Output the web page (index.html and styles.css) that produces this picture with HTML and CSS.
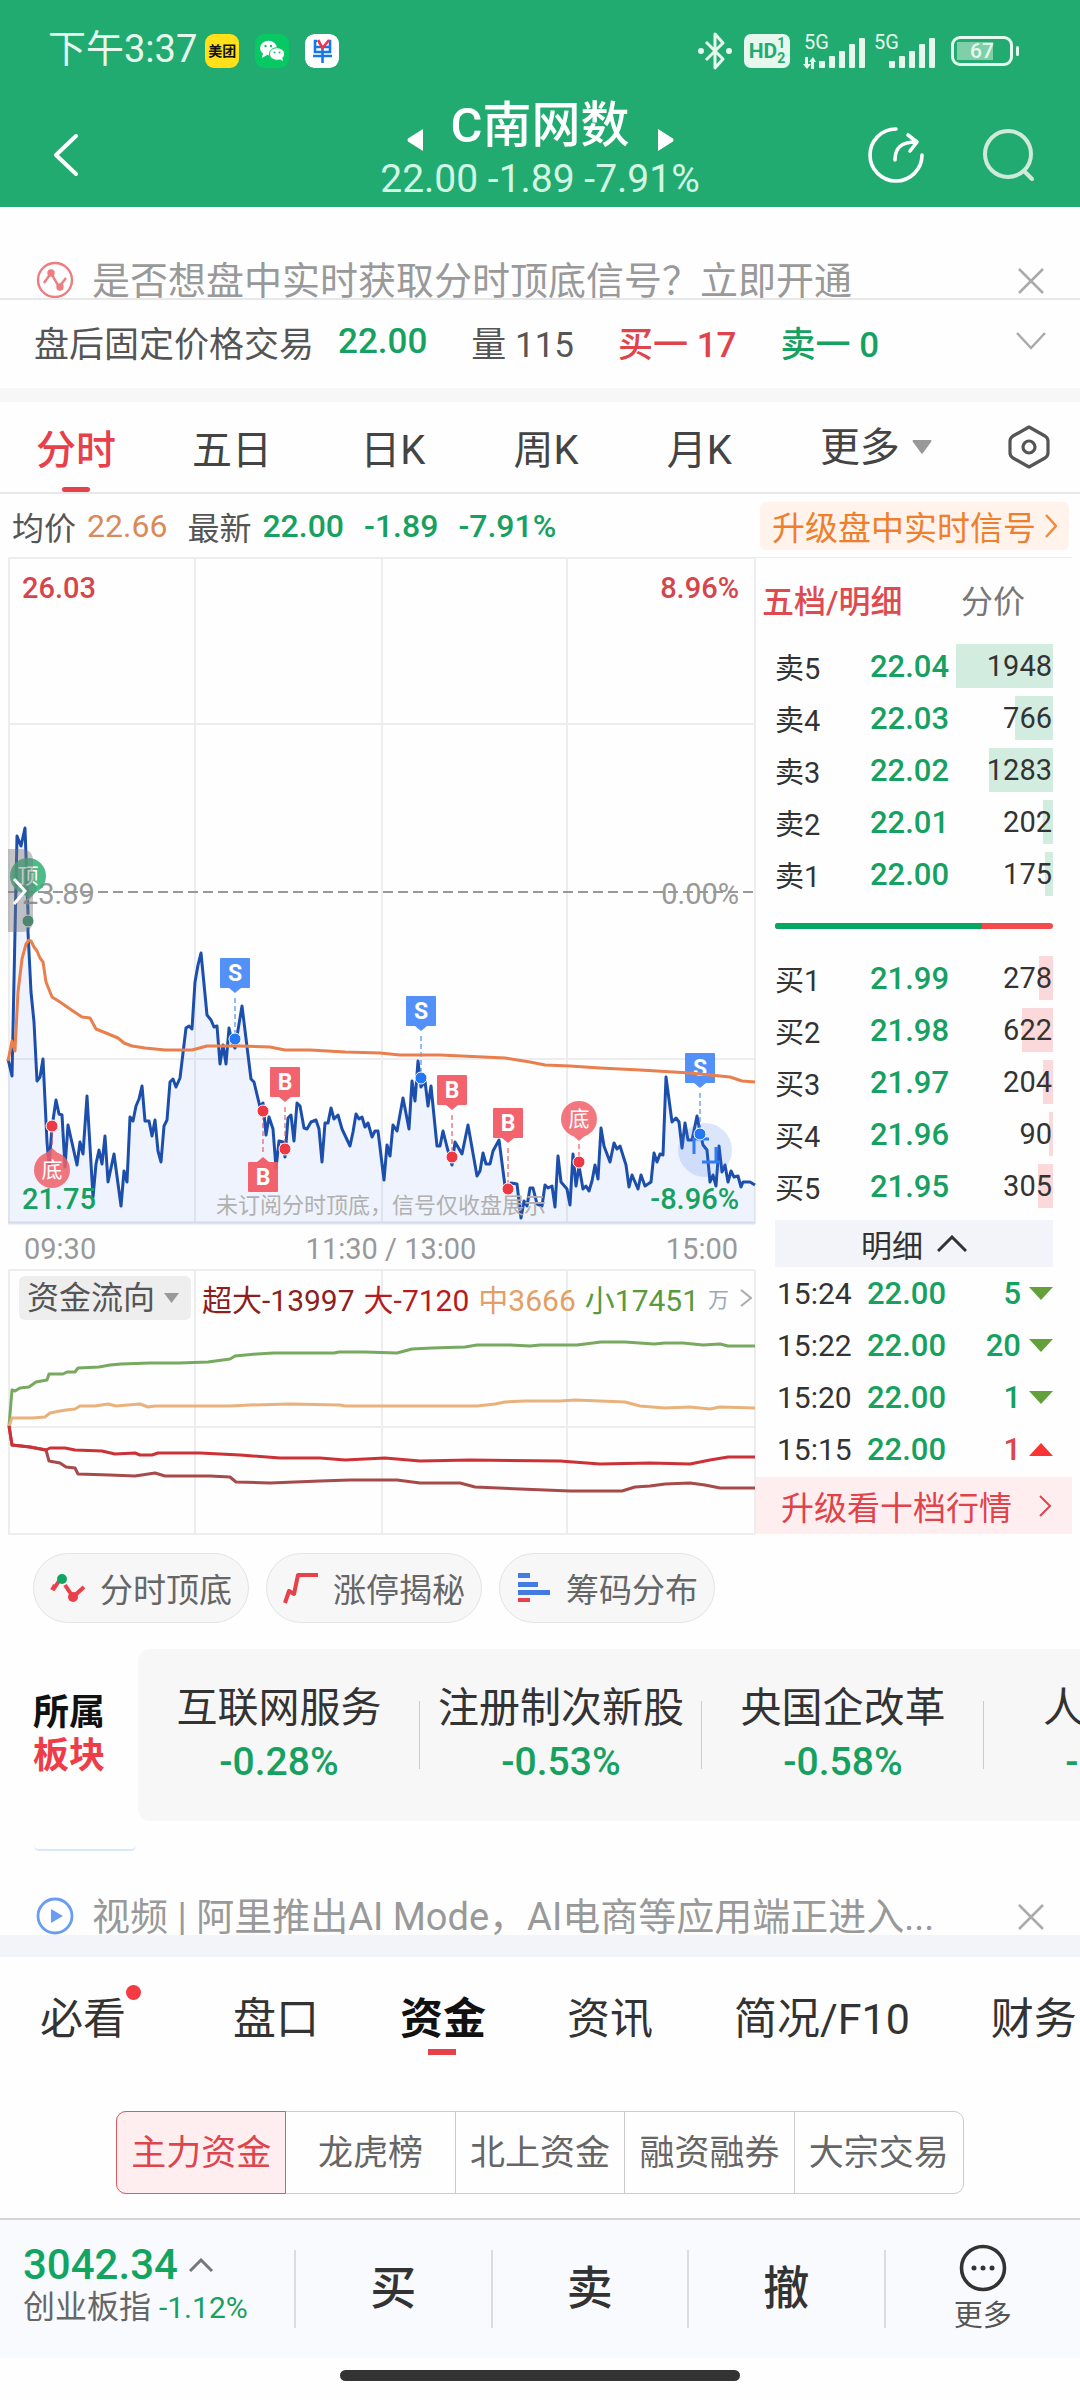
FILE: index.html
```html
<!DOCTYPE html>
<html lang="zh-CN">
<head>
    <meta charset="UTF-8">
    <meta name="viewport" content="width=device-width, initial-scale=1">
    <title>C南网数</title>
    <link rel="stylesheet" href="styles.css">
</head>
<body>
    <header class="top">
        <!-- Status bar -->
        <div class="status">
            <span class="clock">下午3:37</span>
            <span class="app-icon app-meituan">美团</span>
            <svg class="app-icon" viewBox="0 0 34 34">
                <rect width="34" height="34" rx="9" fill="#07c964"/>
                <ellipse cx="13.500" cy="14" rx="8.500" ry="7.200" fill="#fff"/>
                <path d="M8 19l-1 5 5-3z" fill="#fff"/>
                <ellipse cx="22" cy="20" rx="7.600" ry="6.300" fill="#fff" stroke="#07c964"/>
                <path d="M24 25l4 2-1-4z" fill="#fff"/>
                <g fill="#07c964"><circle cx="10.500" cy="12" r="1.200"/><circle cx="16" cy="12" r="1.200"/><circle cx="19.500" cy="18.500" r="1"/><circle cx="24.500" cy="18.500" r="1"/></g>
            </svg>
            <svg class="app-icon" viewBox="0 0 34 34" fill="none" stroke="#1678e8" stroke-width="2.600">
                <rect width="34" height="34" rx="9" fill="#fff" stroke="none"/>
                <path d="M12 7H10v11h15V7h-2M10 13h15M8 22h19M17.500 14v15"/>
                <path d="M13 6l4.500 8L24 6" stroke="#f0344a"/>
            </svg>
            <span class="spacer"></span>
            <svg class="bt" viewBox="0 0 36 40" fill="none" stroke="#e6f8ee" stroke-width="3">
                <path d="M9 11l17 17-8 9V3l8 9L9 29" stroke-linejoin="round"/>
                <circle cx="4" cy="20" r="1.500"/><circle cx="32" cy="20" r="1.500"/>
            </svg>
            <span class="hd">HD<span class="hd-sim"><i>1</i><i>2</i></span></span>
            <svg class="signal" viewBox="0 0 64 36" fill="#e6f8ee">
                <text x="0" y="16" font-size="20">5G</text>
                <path d="M2 24h3v7h3l-4 5-4-5h2zM8 36v-7H6l4-5 3 5h-2v7z" transform="translate(-1 0)"/>
                <rect x="15" y="28" width="6" height="7" rx="1"/><rect x="25" y="23" width="6" height="12" rx="1"/><rect x="35" y="18" width="6" height="17" rx="1"/><rect x="45" y="11" width="6" height="24" rx="1"/><rect x="55" y="5" width="6" height="30" rx="1"/>
            </svg>
            <svg class="signal" viewBox="0 0 64 36" fill="#e6f8ee">
                <text x="0" y="16" font-size="20">5G</text>
                <rect x="15" y="28" width="6" height="7" rx="1"/><rect x="25" y="23" width="6" height="12" rx="1"/><rect x="35" y="18" width="6" height="17" rx="1"/><rect x="45" y="11" width="6" height="24" rx="1"/><rect x="55" y="5" width="6" height="30" rx="1"/>
            </svg>
            <span class="battery">67</span>
        </div>

        <!-- Title bar -->
        <div class="titlebar">
            <button class="icon-btn back" aria-label="返回">
                <svg width="26" height="44" viewBox="0 0 26 44" fill="none" stroke="#fff" stroke-width="4" stroke-linecap="round" stroke-linejoin="round"><path d="M23 3L3 22l20 19"/></svg>
            </button>
            <div class="title">
                <div class="title-row">
                    <svg width="16" height="22" viewBox="0 0 16 22" fill="#fff"><path d="M16 0v22L1 12.500q-1-1.500 0-3z"/></svg>
                    <h1>C南网数</h1>
                    <svg width="16" height="22" viewBox="0 0 16 22" fill="#fff"><path d="M0 0v22l15-9.500q1-1.500 0-3z"/></svg>
                </div>
                <p>22.00 -1.89 -7.91%</p>
            </div>
            <div class="title-actions">
                <button class="icon-btn" aria-label="分享">
                    <svg width="56" height="56" viewBox="0 0 56 56" fill="none" stroke="#fff" stroke-width="3.600" stroke-linecap="round" stroke-linejoin="round"><path d="M28 2A26 26 0 1 0 54 28"/><path d="M27 33c0-12 6-18 21-18M40 8l9 7-7 9"/></svg>
                </button>
                <button class="icon-btn" aria-label="搜索">
                    <svg width="54" height="56" viewBox="0 0 54 56" fill="none" stroke="#cfeadb" stroke-width="4" stroke-linecap="round"><circle cx="26" cy="27" r="23"/><path d="M42 44l8 8"/></svg>
                </button>
            </div>
        </div>
    </header>

    <div class="notice">
        <svg width="38" height="38" viewBox="0 0 38 38" fill="none" stroke="#ee7c80" stroke-width="2.400"><circle cx="19" cy="19" r="17"/><path d="M8 22l7-10 8 14 7-9"/><circle cx="15" cy="12" r="2.500" fill="#ee7c80"/><circle cx="24" cy="26" r="2.500" fill="#ee7c80"/></svg>
        <a href="#">是否想盘中实时获取分时顶底信号？立即开通</a>
        <button class="icon-btn" aria-label="关闭">
            <svg width="26" height="26" viewBox="0 0 26 26" stroke="#aaa" stroke-width="2.500"><path d="M1 1l24 24M25 1L1 25"/></svg>
        </button>
    </div>

    <div class="fixed-price">
        <span>盘后固定价格交易</span><b class="green">22.00</b>
        <span class="item">量 115</span>
        <b class="item red">买一 17</b>
        <b class="item green">卖一 0</b>
        <button class="icon-btn" aria-label="展开">
            <svg width="30" height="20" viewBox="0 0 30 20" fill="none" stroke="#aaa" stroke-width="2.500"><path d="M1 2l14 15L29 2"/></svg>
        </button>
    </div>

    <nav class="period-tabs">
        <button class="active">分时</button>
        <button>五日</button>
        <button>日K</button>
        <button>周K</button>
        <button>月K</button>
        <label class="dropdown">
            <select aria-label="更多周期"><option>更多</option></select>
            <svg width="20" height="14" viewBox="0 0 20 14" fill="#999"><path d="M1 0h18q1 1 0 2l-8 11q-1 1-2 0L1 2q-1-1 0-2z"/></svg>
        </label>
        <button class="settings icon-btn" aria-label="设置">
            <svg width="42" height="44" viewBox="0 0 42 44" fill="none" stroke="#555" stroke-width="3.200" stroke-linejoin="round"><path d="M21 2l16 9q3 2 3 5v12q0 3-3 5l-16 9-16-9q-3-2-3-5V16q0-3 3-5z"/><circle cx="21" cy="22" r="6"/></svg>
        </button>
    </nav>

    <div class="quote-line">
        <span>均价</span><span class="orange">22.66</span>
        <span class="gap">最新</span><b class="green">22.00</b>
        <b class="green gap-s">-1.89</b>
        <b class="green gap-s">-7.91%</b>
        <a class="upgrade-tag" href="#">升级盘中实时信号
            <svg width="12" height="24" viewBox="0 0 12 24" fill="none" stroke="#f08a3c" stroke-width="2.500"><path d="M1 1l10 11L1 23"/></svg>
        </a>
    </div>

    <main class="market">
        <section class="charts">
            <!-- Intraday chart -->
            <svg class="plot" viewBox="0 558 756 708">
                <g fill="none" stroke="#ededf0" stroke-width="2">
                    <path d="M8 559H755M8 725H755M8 1060H755M9 558V1225M195 558V1225M382 558V1225M567 558V1225M755 558V1225"/>
                    <path d="M8 1224H755" stroke="#dfe3ec" stroke-width="3"/>
                </g>
                <path d="M8 893H755" stroke="#999" stroke-width="2" stroke-dasharray="10 5"/>
                <path id="area" fill="#3c78f0" fill-opacity=".08"/>
                <path id="price" class="line" stroke="#1c4fac" stroke-width="3"/>

                <g class="scale">
                    <text x="22" y="599" class="t-red">26.03</text>
                    <text x="739" y="599" class="t-red" text-anchor="end">8.96%</text>
                    <text x="22" y="905" class="t-gray">23.89</text>
                    <text x="739" y="905" class="t-gray" text-anchor="end">0.00%</text>
                    <text x="22" y="1210" class="t-green">21.75</text>
                    <text x="739" y="1210" class="t-green" text-anchor="end">-8.96%</text>
                    <text x="24" y="1260" class="t-gray">09:30</text>
                    <text x="391" y="1260" class="t-gray" text-anchor="middle">11:30 / 13:00</text>
                    <text x="738" y="1260" class="t-gray" text-anchor="end">15:00</text>
                </g>
                <text x="216" y="1214" class="watermark">未订阅分时顶底，信号仅收盘展示</text>

                <!-- Current price -->
                <circle cx="705" cy="1151" r="27" fill="#3c78f0" fill-opacity=".18"/>
                <path d="M694 1155V1140H709M702 1163H720M716 1163V1148" fill="none" stroke="#2f7cf6" stroke-width="3"/>

                <!-- Signal markers -->
                <g id="markers"></g>

                <!-- Average price -->
                <path class="line" stroke="#e87f4c" stroke-width="3" d="M8 1062L12 1042 15 1052 18 993 22 960 26 945 29 941 31 942 34 948 37 952 40 959 43 963 46 983 50 993 52 998 60 1003 70 1010 82 1018 90 1019 96 1030 106 1034 118 1039 124 1044 132 1047 145 1049 165 1051 192 1051 207 1047 240 1047 270 1048 285 1051 310 1051 345 1053 380 1054 400 1056 440 1056 505 1059 530 1063 545 1066 570 1067 600 1069 640 1071 690 1074 730 1078 742 1082 755 1083"/>

                <!-- Drawer handle -->
                <path d="M8 850H21Q33 850 33 862V921Q33 933 21 933H8z" fill="#777" fill-opacity=".42"/>
                <path d="M14 880L25 892 14 905" fill="none" stroke="#fff" stroke-width="3"/>
            </svg>

            <!-- Fund flow chart -->
            <div class="flow">
                <svg class="plot" viewBox="0 1266 756 270">
                    <path d="M8 1271H755M8 1428H755M8 1535H755M9 1271V1535M195 1271V1535M382 1271V1535M567 1271V1535M755 1271V1535" fill="none" stroke="#ededf0" stroke-width="2"/>
                    <g class="line" stroke-width="3">
                        <path stroke="#78a960" d="M9 1427L12 1391 15 1392 20 1389 29 1388 36 1383 47 1381 49 1375 63 1375 67 1373 75 1373 78 1369 99 1368 110 1366 121 1365 150 1364 179 1364 208 1363 230 1360 235 1357 257 1355 274 1354 334 1354 339 1353 365 1353 397 1354 412 1350 432 1349 465 1348 477 1346 510 1346 530 1347 540 1346 577 1346 601 1343 625 1343 654 1345 665 1344 683 1344 703 1346 720 1345 728 1347 755 1347"/>
                        <path stroke="#e9b27c" d="M9 1427L12 1419 32 1419 45 1418 50 1414 60 1412 66 1411 75 1410 80 1407 95 1407 108 1405 116 1407 128 1406 140 1405 148 1408 155 1407 200 1407 230 1407 250 1406 290 1405 340 1406 345 1407 477 1407 495 1405 505 1403 525 1402 560 1402 575 1401 600 1402 625 1403 640 1407 665 1409 690 1408 710 1410 720 1408 755 1409"/>
                        <path stroke="#a64a4a" d="M9 1427L12 1446 30 1448 46 1451 49 1462 60 1464 66 1468 75 1469 78 1475 110 1476 135 1477 155 1474 165 1477 180 1477 210 1477 230 1478 236 1483 270 1484 320 1482 350 1481 397 1481 420 1484 460 1484 475 1488 520 1490 570 1492 622 1492 635 1488 650 1487 665 1485 690 1484 705 1486 720 1489 755 1489"/>
                        <path stroke="#cc3135" d="M9 1427L12 1446 30 1448 46 1451 50 1449 65 1449 75 1451 102 1452 115 1455 135 1454 140 1456 152 1456 158 1454 200 1454 240 1456 280 1459 320 1459 345 1461 385 1459 420 1462 470 1461 560 1462 600 1465 650 1464 690 1465 710 1461 728 1458 755 1458"/>
                    </g>
                </svg>
                <div class="flow-head">
                    <label class="dropdown flow-select">
                        <select aria-label="指标"><option>资金流向</option></select>
                        <svg width="15" height="10" viewBox="0 0 15 10" fill="#999"><path d="M0 0h15L7.500 10z"/></svg>
                    </label>
                    <span class="f-xl">超大-13997</span>
                    <span class="f-l">大-7120</span>
                    <span class="f-m">中3666</span>
                    <span class="f-s">小17451</span>
                    <small>万</small>
                    <svg width="12" height="18" viewBox="0 0 12 18" fill="none" stroke="#aaa" stroke-width="2"><path d="M1 1l10 8L1 17"/></svg>
                </div>
            </div>
        </section>

        <aside class="book">
            <div class="book-tabs">
                <button class="active">五档/明细</button>
                <button>分价</button>
            </div>
            <table class="levels sell">
                <tr><th>卖5</th><td>22.04</td><td style="--bar: 97px">1948</td></tr>
                <tr><th>卖4</th><td>22.03</td><td style="--bar: 38px">766</td></tr>
                <tr><th>卖3</th><td>22.02</td><td style="--bar: 64px">1283</td></tr>
                <tr><th>卖2</th><td>22.01</td><td style="--bar: 10px">202</td></tr>
                <tr><th>卖1</th><td>22.00</td><td style="--bar: 8px">175</td></tr>
            </table>
            <div class="ratio"><span style="width: 74.500%"></span></div>
            <table class="levels buy">
                <tr><th>买1</th><td>21.99</td><td style="--bar: 14px">278</td></tr>
                <tr><th>买2</th><td>21.98</td><td style="--bar: 31px">622</td></tr>
                <tr><th>买3</th><td>21.97</td><td style="--bar: 10px">204</td></tr>
                <tr><th>买4</th><td>21.96</td><td style="--bar: 4px">90</td></tr>
                <tr><th>买5</th><td>21.95</td><td style="--bar: 15px">305</td></tr>
            </table>
            <button class="detail-toggle">明细
                <svg width="30" height="17" viewBox="0 0 30 17" fill="none" stroke="#333" stroke-width="3"><path d="M1 16L15 2l14 14"/></svg>
            </button>
            <table class="trades">
                <tr><th>15:24</th><td>22.00</td><td>5</td><td><svg width="24" height="13" viewBox="0 0 24 13"><path d="M0 0h24L12 13z" fill="#63a03c"/></svg></td></tr>
                <tr><th>15:22</th><td>22.00</td><td>20</td><td><svg width="24" height="13" viewBox="0 0 24 13"><path d="M0 0h24L12 13z" fill="#63a03c"/></svg></td></tr>
                <tr><th>15:20</th><td>22.00</td><td>1</td><td><svg width="24" height="13" viewBox="0 0 24 13"><path d="M0 0h24L12 13z" fill="#63a03c"/></svg></td></tr>
                <tr><th>15:15</th><td>22.00</td><td class="red">1</td><td><svg width="24" height="13" viewBox="0 0 24 13"><path d="M0 13h24L12 0z" fill="#f93434"/></svg></td></tr>
            </table>
            <a class="upgrade-bar" href="#">升级看十档行情
                <svg width="13" height="22" viewBox="0 0 13 22" fill="none" stroke="#e0434a" stroke-width="2"><path d="M1 1l10 10L1 21"/></svg>
            </a>
        </aside>
    </main>

    <div class="chips">
        <button>
            <svg width="36" height="32" viewBox="0 0 36 32" fill="none" stroke="#e8414b" stroke-width="4"><path d="M2 18L5 13M15 13l8 12L34 15"/><path d="M9 9L3 18"/><circle cx="12" cy="7" r="5" fill="#12a561" stroke="none"/><circle cx="23" cy="25" r="5" fill="#e8414b" stroke="none"/></svg>
            分时顶底
        </button>
        <button>
            <svg width="36" height="32" viewBox="0 0 36 32" fill="none" stroke="#e8414b" stroke-width="4" stroke-linejoin="round"><path d="M2 31l4-12 5 3 4-19h20"/></svg>
            涨停揭秘
        </button>
        <button>
            <svg width="36" height="32" viewBox="0 0 36 32" fill="#447be0"><rect x="2" y="1" width="12" height="5"/><rect x="2" y="10" width="20" height="5"/><rect x="2" y="18" width="32" height="5"/><rect x="2" y="26" width="12" height="4" fill="#e8414b"/></svg>
            筹码分布
        </button>
    </div>

    <section class="boards">
        <h2>所属<br><em>板块</em></h2>
        <ul>
            <li><span>互联网服务</span><b>-0.28%</b></li>
            <li><span>注册制次新股</span><b>-0.53%</b></li>
            <li><span>央国企改革</span><b>-0.58%</b></li>
            <li><span>人工智能</span><b>-0.95%</b></li>
        </ul>
    </section>
    <div class="card-edge"></div>

    <div class="notice notice-video">
        <svg width="38" height="38" viewBox="0 0 38 38"><circle cx="19" cy="19" r="17" fill="none" stroke="#6a9cf5" stroke-width="2.800"/><path d="M15 12l12 7-12 7z" fill="#6a9cf5"/></svg>
        <a href="#">视频 | 阿里推出AI Mode，AI电商等应用端正进入...</a>
        <button class="icon-btn" aria-label="关闭">
            <svg width="26" height="26" viewBox="0 0 26 26" stroke="#aaa" stroke-width="2.500"><path d="M1 1l24 24M25 1L1 25"/></svg>
        </button>
    </div>

    <nav class="info-tabs">
        <button class="dot">必看</button>
        <button>盘口</button>
        <button class="active">资金</button>
        <button>资讯</button>
        <button>简况/F10</button>
        <button>财务</button>
    </nav>

    <div class="segment">
        <button class="active">主力资金</button>
        <button>龙虎榜</button>
        <button>北上资金</button>
        <button>融资融券</button>
        <button>大宗交易</button>
    </div>

    <footer class="trade-bar">
        <div class="index">
            <div class="index-value">3042.34
                <svg width="24" height="14" viewBox="0 0 24 14" fill="none" stroke="#777" stroke-width="3"><path d="M1 13L12 2l11 11"/></svg>
            </div>
            <div class="index-name">创业板指 <span>-1.12%</span></div>
        </div>
        <button>买</button>
        <button>卖</button>
        <button>撤</button>
        <button class="more">
            <svg width="48" height="48" viewBox="0 0 48 48" fill="none" stroke="#333" stroke-width="3.600"><circle cx="24" cy="24" r="21.500"/><g fill="#333" stroke="none"><circle cx="15" cy="24" r="2.500"/><circle cx="24" cy="24" r="2.500"/><circle cx="33" cy="24" r="2.500"/></g></svg>
            更多
        </button>
    </footer>
    <div class="home-bar"></div>

    <script>
        // Intraday price line, x y pairs
        const price = '8 1060 12 1077 13 1030 15 933 17 837 21 847 25 829 28 913 28 933 31 993 34 1023 37 1082 40 1078 43 1060 47 1143 49 1167 52 1128 56 1101 59 1115 62 1116 65 1168 68 1126 77 1166 80 1143 83 1155 87 1097 93 1198 96 1165 99 1151 102 1165 105 1137 108 1183 114 1155 121 1207 124 1172 127 1183 130 1118 133 1122 136 1107 139 1100 142 1087 145 1122 149 1122 152 1137 155 1121 158 1152 161 1163 164 1127 167 1121 170 1083 173 1080 176 1088 180 1079 186 1029 189 1027 192 1030 195 983 198 966 201 954 207 1016 211 1021 214 1028 217 1027 220 1065 223 1046 226 1065 229 1029 232 1043 235 1049 242 1007 251 1080 254 1083 260 1108 263 1104 266 1136 269 1118 273 1130 276 1169 279 1142 283 1143 285 1158 288 1119 291 1116 294 1142 297 1104 300 1107 304 1129 307 1130 311 1123 316 1121 319 1130 322 1163 325 1124 328 1124 331 1109 334 1120 338 1116 342 1130 350 1147 353 1133 356 1115 359 1120 362 1118 365 1128 368 1124 372 1138 375 1132 378 1132 384 1181 387 1146 390 1157 393 1126 397 1132 403 1099 409 1130 412 1082 415 1102 418 1062 421 1088 425 1082 428 1107 431 1087 437 1147 440 1147 443 1132 447 1148 452 1166 455 1143 462 1155 468 1126 477 1177 480 1172 483 1154 486 1165 490 1165 493 1152 499 1141 505 1187 508 1195 511 1184 517 1185 521 1219 524 1202 527 1207 530 1189 533 1189 537 1205 542 1207 545 1186 548 1189 552 1187 555 1208 558 1157 561 1183 567 1190 570 1206 573 1155 576 1187 579 1167 583 1190 586 1187 589 1192 592 1182 595 1166 598 1180 601 1129 604 1147 610 1163 614 1144 617 1150 620 1147 626 1166 629 1188 632 1176 638 1190 641 1176 645 1187 651 1183 654 1154 657 1163 660 1155 663 1156 666 1078 672 1123 676 1119 679 1123 682 1149 685 1124 688 1141 692 1141 697 1117 700 1133 703 1146 707 1151 710 1183 713 1176 716 1187 719 1147 722 1173 725 1166 728 1183 731 1172 734 1178 738 1177 741 1188 743 1183 750 1183 755 1186';
        document.getElementById('price').setAttribute('d', 'M' + price);
        document.getElementById('area').setAttribute('d', 'M8 1224L' + price + ' 755 1224z');

        // x, label centre y, dot y, text
        const markers = [
            [235, 974, 1040, 'S'], [263, 1178, 1112, 'B'], [285, 1083, 1150, 'B'],
            [421, 1012, 1079, 'S'], [452, 1091, 1158, 'B'], [508, 1124, 1190, 'B'],
            [700, 1069, 1135, 'S'], [52, 1171, 1127, '底'], [579, 1120, 1163, '底'],
            [28, 877, 922, '顶']
        ];
        const fills = { S: '#4a8bf8', B: '#f25b66', '底': '#f0606a', '顶': '#2fb176' };
        const dots = { S: '#2478f5', B: '#ee3843', '底': '#ee3843', '顶': '#2f9068' };

        document.getElementById('markers').innerHTML = markers.map(([x, y, dot, label]) => {
            const dir = dot > y ? 1 : -1;
            const round = label === '底' || label === '顶';
            const shape = round
                ? `<circle cx="${x}" cy="${y}" r="18"/><path d="M${x - 8} ${y + dir * 15}h16l-8 ${dir * 7}z"/>`
                : `<rect x="${x - 15}" y="${y - 15}" width="30" height="30" rx="1"/><path d="M${x - 6} ${y + dir * 15}h12l-6 ${dir * 5}z"/>`;
            return `
                <path d="M${x} ${y + dir * 25}V${dot}" stroke="${dots[label]}" stroke-width="1" stroke-dasharray="5 3"/>
                <g fill="${fills[label]}" opacity="${round ? 0.85 : 0.95}">${shape}</g>
                <text x="${x}" y="${y + (round ? 7 : 8)}" class="${round ? 'pin-text' : 'flag-text'}">${label}</text>
                <circle cx="${x}" cy="${dot}" r="6" fill="${dots[label]}" stroke="#fff" stroke-width="1"/>`;
        }).join('');
    </script>
</body>
</html>
```
FILE: styles.css
```css
* {
    box-sizing: border-box;
    margin: 0;
    padding: 0;
}

body {
    font-family: Roboto, "Noto Sans CJK SC", sans-serif;
    background-color: #fefefe;
    color: #555;
    overflow-x: hidden;
}

button, select {
    font: inherit;
    color: inherit;
    background: none;
    border: none;
    cursor: pointer;
}

a {
    color: inherit;
    text-decoration: none;
}

b, th {
    font-weight: 500;
}

svg {
    flex: none;
    display: block;
}

.red {
    color: #e0434a;
}

.green {
    color: #16a161;
}

.orange {
    color: #d98a58;
}

.spacer {
    flex: 1;
}

/* Header */
.top {
    height: 207px;
    background-color: #22ab70;
    color: #fff;
}

.status {
    display: flex;
    align-items: center;
    height: 102px;
    padding: 0 67px 0 48px;
    color: #e6f8ee;
}

.clock {
    font-size: 38px;
    line-height: 46px;
    margin-right: 8px;
    padding-bottom: 4px;
}

.app-icon {
    width: 34px;
    height: 34px;
    margin-right: 16px;
    border-radius: 9px;
}

.app-meituan {
    background-color: #ffe019;
    color: #111;
    font-size: 14px;
    font-weight: 700;
    line-height: 34px;
    text-align: center;
}

.bt {
    width: 36px;
    height: 40px;
    margin-right: 11px;
}

.hd {
    display: flex;
    align-items: center;
    justify-content: center;
    width: 46px;
    height: 34px;
    border-radius: 7px;
    background-color: #e6f8ee;
    color: #22ab70;
    font-size: 21px;
    font-weight: 700;
    margin-right: 14px;
}

.hd-sim {
    font-size: 14px;
    line-height: 15px;
}

.hd-sim i {
    display: block;
    font-style: normal;
}

.signal {
    width: 64px;
    height: 36px;
    margin-right: 6px;
    overflow: visible;
}

.battery {
    position: relative;
    width: 62px;
    height: 30px;
    margin-left: 7px;
    border: 3px solid #e6f8ee;
    border-radius: 9px;
    background: linear-gradient(#7fcfa9, #7fcfa9) no-repeat 3px 3px / 36px 18px;
    font-size: 21px;
    font-weight: 500;
    line-height: 24px;
    text-align: center;
}

.battery::after {
    content: "";
    position: absolute;
    right: -9px;
    top: 7px;
    width: 3px;
    height: 10px;
    border-radius: 2px;
    background-color: #e6f8ee;
}

.titlebar {
    display: flex;
    align-items: center;
    height: 105px;
    padding: 0 44px 0 53px;
}

.icon-btn {
    display: flex;
}

.back {
    width: 171px;
}

.title {
    flex: 1;
    padding-bottom: 10px;
    text-align: center;
}

.title-row {
    display: flex;
    justify-content: center;
    align-items: flex-end;
    gap: 28px;
}

.title-row svg {
    margin-bottom: 4px;
}

.title h1 {
    font-size: 49px;
    font-weight: 500;
    line-height: 58px;
}

.title p {
    font-size: 39px;
    line-height: 48px;
    color: #d2f6e4;
}

.title-actions {
    display: flex;
    justify-content: flex-end;
    gap: 58px;
    width: 180px;
}

/* Notices */
.notice {
    display: flex;
    align-items: flex-start;
    gap: 18px;
    height: 93px;
    padding: 54px 36px 0;
    border-bottom: 2px solid #e8e8e8;
    overflow: hidden;
    font-size: 38px;
    line-height: 40px;
    color: #999;
}

.notice a {
    flex: 1;
    white-space: nowrap;
}

.notice .icon-btn {
    padding-top: 7px;
}

.notice-video {
    height: 106px;
    padding-top: 46px;
    border-bottom: 22px solid #f2f4f9;
}

.fixed-price {
    display: flex;
    align-items: center;
    height: 88px;
    padding: 0 34px 6px;
    font-size: 35px;
}

.fixed-price span + b {
    margin-left: 24px;
}

.fixed-price .item {
    margin-left: 44px;
}

.fixed-price .icon-btn {
    margin-left: auto;
}

/* Period tabs */
.period-tabs {
    display: flex;
    align-items: stretch;
    justify-content: space-between;
    height: 106px;
    padding: 0 30px 0 36px;
    border-top: 14px solid #f7f7f7;
    border-bottom: 2px solid #e8e8e8;
    font-size: 40px;
    color: #444;
}

.period-tabs .active {
    position: relative;
    margin-right: -12px;
    color: #e6414b;
    font-weight: 500;
}

.period-tabs .active::after {
    content: "";
    position: absolute;
    left: 26px;
    bottom: 0;
    width: 28px;
    height: 5px;
    border-radius: 3px;
    background-color: #e6414b;
}

.period-tabs .settings {
    align-items: center;
    margin-left: -12px;
}

.dropdown {
    display: flex;
    align-items: center;
    gap: 12px;
    cursor: pointer;
}

.dropdown select {
    appearance: none;
    outline: none;
}

/* Average / latest price */
.quote-line {
    display: flex;
    align-items: center;
    height: 63px;
    padding: 0 11px 0 12px;
    font-size: 32px;
}

.quote-line span + span,
.quote-line span + b {
    margin-left: 11px;
}

.quote-line .orange + .gap,
.quote-line .gap-s {
    margin-left: 20px;
}

.upgrade-tag {
    display: flex;
    align-items: center;
    justify-content: space-between;
    width: 309px;
    height: 48px;
    margin-left: auto;
    padding: 0 12px;
    border-radius: 6px;
    background-color: #fff3eb;
    color: #ee7f2d;
    font-size: 33px;
    white-space: nowrap;
}

/* Charts */
.market {
    display: flex;
    padding-right: 8px;
}

.charts {
    flex: 1;
    min-width: 0;
}

.plot {
    width: 100%;
    height: auto;
}

.line {
    fill: none;
    stroke-linejoin: round;
}

.scale {
    font-size: 29px;
    font-weight: 500;
}

.t-red {
    fill: #d6454c;
}

.t-gray {
    fill: #999;
    font-weight: 400;
}

.t-green {
    fill: #16a161;
}

.watermark {
    font-size: 22px;
    fill: #b0b0b0;
}

.flag-text {
    font-size: 23px;
    font-weight: 700;
    fill: #fff;
    text-anchor: middle;
}

.pin-text {
    font-size: 21px;
    fill: #fff;
    text-anchor: middle;
}

.flow {
    position: relative;
}

.flow-head {
    position: absolute;
    top: 11px;
    left: 19px;
    right: 4px;
    display: flex;
    align-items: center;
    gap: 9px;
    font-size: 30px;
    white-space: nowrap;
}

.flow-select {
    height: 44px;
    padding: 0 12px 0 8px;
    gap: 8px;
    margin-right: 2px;
    border-radius: 6px;
    background-color: #eee;
    font-size: 32px;
}

.flow-head small {
    font-size: 21px;
    color: #9aa8b8;
}

.flow-head > svg {
    margin-left: auto;
}

.f-xl {
    color: #8d1f1f;
}

.f-l {
    color: #b91a1c;
}

.f-m {
    color: #e2a066;
}

.f-s {
    color: #599a3d;
}

/* Order book */
.book {
    flex: 0 0 316px;
    border-top: 1px solid #ececec;
    color: #333;
    font-size: 29px;
}

.book table {
    width: 278px;
    margin-left: 19px;
    border-collapse: collapse;
    table-layout: fixed;
}

.book tr {
    height: 52px;
}

.book th {
    width: 82px;
    font-weight: 400;
    text-align: left;
}

.book td {
    color: #16a161;
    font-size: 31px;
    font-weight: 500;
    text-align: right;
}

.book-tabs {
    display: flex;
    justify-content: space-between;
    height: 82px;
    padding: 0 47px 0 6px;
    font-size: 32px;
    color: #777;
}

.book-tabs .active {
    color: #dd4b50;
    font-weight: 500;
}

.book .levels td:last-child {
    width: 104px;
    padding-right: 1px;
    color: #333;
    font-size: 29px;
    font-weight: 400;
}

.sell td:last-child {
    background: linear-gradient(#d2ede0, #d2ede0) no-repeat right center / var(--bar) 44px;
}

.buy td:last-child {
    background: linear-gradient(#fbd9db, #fbd9db) no-repeat right center / var(--bar) 44px;
}

.ratio {
    width: 278px;
    height: 6px;
    margin: 23px 0 23px 19px;
    border-radius: 3px;
    overflow: hidden;
    background-color: #f44a4c;
}

.ratio span {
    display: block;
    height: 6px;
    background-color: #04a860;
}

.detail-toggle {
    display: flex;
    align-items: center;
    justify-content: center;
    gap: 14px;
    width: 278px;
    height: 47px;
    margin: 8px 0 0 19px;
    background-color: #f3f4f9;
    font-size: 31px;
}

.book .trades th {
    width: 84px;
    padding-left: 2px;
    font-size: 30px;
}

.book .trades td:nth-child(2) {
    width: 87px;
}

.book .trades td:last-child {
    width: 32px;
    padding-left: 8px;
}

.book .trades .red {
    color: #e0434a;
}

.upgrade-bar {
    display: flex;
    align-items: center;
    justify-content: space-between;
    height: 57px;
    margin-top: 2px;
    padding: 0 20px 0 25px;
    background-color: #ffeeef;
    color: #e0434a;
    font-size: 33px;
}

/* Tool chips */
.chips {
    display: flex;
    gap: 17px;
    padding: 18px 33px 26px;
}

.chips button {
    display: flex;
    align-items: center;
    gap: 14px;
    height: 70px;
    padding: 0 16px;
    border: 1px solid #e3e3e3;
    border-radius: 35px;
    background-color: #f7f7f7;
    font-size: 33px;
    color: #666;
}

/* Boards */
.boards {
    display: flex;
    align-items: center;
}

.boards h2 {
    flex: 0 0 138px;
    padding-left: 33px;
    font-size: 36px;
    line-height: 43px;
    color: #111;
}

.boards em {
    color: #ee3d48;
    font-style: normal;
}

.boards ul {
    display: flex;
    flex: 1;
    min-width: 0;
    overflow: hidden;
    height: 172px;
    align-items: center;
    border-radius: 12px 0 0 12px;
    background-color: #f7f7f7;
    list-style: none;
}

.boards li {
    flex: 0 0 282px;
    text-align: center;
    white-space: nowrap;
    font-size: 41px;
    color: #333;
    background: linear-gradient(#ccc, #ccc) no-repeat right center / 1px 68px;
}

.boards li span,
.boards li b {
    display: block;
    line-height: 54px;
}

.boards li b {
    font-size: 39px;
    color: #16a161;
}

.card-edge {
    width: 102px;
    height: 10px;
    margin: 20px 0 0 34px;
    border-bottom: 2px solid #dbe8fb;
    border-radius: 8px;
}

/* Info tabs */
.info-tabs {
    display: flex;
    gap: 81px;
    height: 154px;
    padding: 26px 0 0 40px;
    overflow: hidden;
    font-size: 43px;
    line-height: 64px;
    color: #333;
}

.info-tabs button {
    position: relative;
    height: 72px;
    flex: none;
}

.info-tabs .dot {
    margin-right: 26px;
}

.info-tabs .dot::after {
    content: "";
    position: absolute;
    top: 2px;
    right: -15px;
    width: 15px;
    height: 15px;
    border-radius: 50%;
    background-color: #f43a43;
}

.info-tabs .active {
    font-weight: 700;
    color: #111;
}

.info-tabs .active::after {
    content: "";
    position: absolute;
    left: 28px;
    bottom: 0;
    width: 28px;
    height: 6px;
    background-color: #e6414b;
}

.segment {
    display: flex;
    height: 83px;
    margin: 0 116px 24px;
    border: 1px solid #ccc;
    border-radius: 10px;
    font-size: 35px;
    color: #666;
}

.segment button {
    flex: 1;
    padding-bottom: 6px;
    white-space: nowrap;
}

.segment button + button {
    border-left: 1px solid #ccc;
}

.segment .active {
    margin: -1px 0 -1px -1px;
    border: 1px solid #dd5a60;
    border-radius: 10px 0 0 10px;
    background-color: #ffeeef;
    color: #dd444b;
}

.segment .active + button {
    border-left: none;
}

/* Bottom trade bar */
.trade-bar {
    display: flex;
    align-items: center;
    height: 140px;
    border-top: 2px solid #d5d5d8;
    background-color: #f9fafd;
}

.index {
    flex: 0 0 294px;
    padding: 0 0 10px 23px;
    white-space: nowrap;
}

.index-value {
    display: flex;
    align-items: center;
    gap: 11px;
    font-size: 42px;
    font-weight: 500;
    line-height: 46px;
    color: #12a561;
}

.index-name {
    font-size: 32px;
    line-height: 38px;
    color: #666;
}

.index-name span {
    font-size: 30px;
    color: #16a161;
}

.trade-bar button {
    flex: 1;
    height: 78px;
    padding-bottom: 10px;
    border-left: 2px solid #dcdce0;
    font-size: 46px;
    font-weight: 500;
    color: #333;
}

.trade-bar .more {
    display: flex;
    flex-direction: column;
    align-items: center;
    justify-content: center;
    gap: 6px;
    padding-bottom: 0;
    font-size: 29px;
    font-weight: 400;
    line-height: 36px;
    color: #555;
}

.home-bar {
    width: 37%;
    height: 11px;
    margin: 12px auto 0;
    border-radius: 6px;
    background-color: #333;
}
```
